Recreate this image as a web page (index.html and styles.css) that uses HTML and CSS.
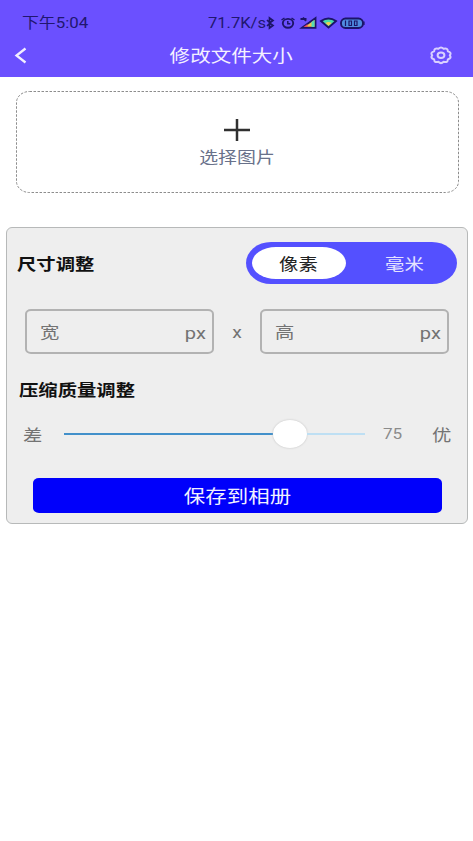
FILE: index.html
```html
<!DOCTYPE html>
<html lang="zh-CN">
<head>
<meta charset="utf-8">
<title>修改文件大小</title>
<link rel="stylesheet" href="styles.css">
</head>
<body>
<header class="header">
  <div class="status">
    <span class="wide left clock">下午5:04</span>
    <span class="wide left speed">71.7K/s</span>
    <svg class="status-icons" width="102" height="16" viewBox="0 0 102 16" fill="none" stroke="#1c1468" stroke-width="1.900">
      <path d="M6.500 3L10 5.500L6.500 8L10 10.500L6.500 13ZM4 5L10 11M4 11L10 5" stroke-width="1.700"/>
      <ellipse cx="25" cy="8.300" rx="5.200" ry="4.400"/>
      <path d="M24.800 6v2.700h2.500M18.500 5l3-2M31.500 5l-3-2" stroke-width="1.500"/>
      <path d="M39 12.800L52.500 3V12.800Z" fill="#f2c34b"/>
      <path d="M40.500 12L44.500 9V12Z" fill="#ee4b5c" stroke="none"/>
      <path d="M48.500 7L51.500 5V12H48.500Z" fill="#55dcb5" stroke="none"/>
      <path d="M37.500 4h6M40 2.500L43 6"/>
      <path d="M58 6Q65.500 1 73 6L65.500 12.500Z" fill="#48dca9"/>
      <path d="M62.500 8Q65.500 6 68.500 8L65.500 10.800Z" fill="#f1cf50" stroke="none"/>
      <rect x="78" y="3.500" width="22" height="9.500" rx="4.500" fill="#4f8ce0"/>
      <path d="M82.500 5.500v5.500M86 6h2.500v4.500H86ZM91.500 6h2.500v4.500h-2.500ZM101 6.500v3.500" stroke-width="1.200"/>
    </svg>
  </div>
  <nav class="navbar">
    <svg class="back" width="14" height="18" viewBox="0 0 14 18" fill="none" stroke="#f2eeff" stroke-width="2.300"><path d="M11.500 1.500L2.500 8.500L11.500 15.500"/></svg>
    <h1 class="wide">修改文件大小</h1>
    <svg class="gear" width="24" height="20" viewBox="0 0 24 20" fill="none" stroke="#d9d0ff" stroke-width="2" stroke-linejoin="round">
      <path d="M9.400 2.800Q12 .2 14.600 2.800Q19 1.600 18.800 5.200Q23 6.400 20.800 9.300Q23 12.200 18.800 13.400Q19 17 14.600 15.800Q12 18.400 9.400 15.800Q5 17 5.200 13.400Q1 12.200 3.200 9.300Q1 6.400 5.200 5.200Q5 1.600 9.400 2.800Z"/>
      <ellipse cx="12" cy="9.300" rx="3.400" ry="2.700"/>
    </svg>
  </nav>
</header>
<main>
  <section class="upload">
    <svg class="outline" width="443" height="102"><rect x=".5" y=".5" width="442" height="101" rx="13" ry="11"/></svg>
    <svg class="plus" width="26" height="22" viewBox="0 0 26 22" stroke="#303030" stroke-width="2.500"><path d="M0 11H26M13 0V22"/></svg>
    <span class="wide upload-label">选择图片</span>
  </section>
  <section class="panel">
    <div class="size-row">
      <h2 class="wide left">尺寸调整</h2>
      <div class="toggle">
        <div class="option selected"><span class="wide">像素</span></div>
        <div class="option"><span class="wide">毫米</span></div>
      </div>
    </div>
    <div class="fields">
      <div class="field"><span class="wide left">宽</span><span class="wide right">px</span></div>
      <span class="wide times">x</span>
      <div class="field"><span class="wide left">高</span><span class="wide right">px</span></div>
    </div>
    <h2 class="wide left quality">压缩质量调整</h2>
    <div class="slider-row">
      <span class="wide left worst">差</span>
      <div class="slider"><div class="filled"></div><div class="thumb"></div><div class="rest"></div></div>
      <span class="wide left value">75</span>
      <span class="wide right best">优</span>
    </div>
    <div class="save"><span class="wide">保存到相册</span></div>
  </section>
</main>
</body>
</html>
```

FILE: styles.css
```css
* { box-sizing: border-box; }
body {
  margin: 0;
  background: #fff;
  font-family: Roboto, "Noto Sans CJK SC", sans-serif;
  font-size: 16.4px;
  line-height: 24px;
  color: #737373;
}
h1, h2 { margin: 0; }
svg { display: block; flex: none; }
.wide { display: inline-block; flex: none; white-space: nowrap; transform: scaleX(1.18); }
.left { transform-origin: left center; }
.right { transform-origin: right center; }

.header { height: 76.5px; padding-top: 11px; background: #6b50ff; }
.status { display: flex; align-items: center; height: 24px; padding-left: 22px; color: #21176f; font-size: 14.3px; }
.clock { width: 186px; }
.speed { width: 55px; font-size: 14px; }
.navbar { display: flex; align-items: center; justify-content: space-between; height: 41px; padding: 0 20px 0 14px; }
.navbar h1 { color: #f4f0ff; font-size: 17.4px; font-weight: 400; margin-left: 6px; padding-top: 1px; }

.upload {
  display: flex;
  flex-direction: column;
  align-items: center;
  width: 443px;
  height: 102px;
  margin: 14.5px 0 0 15.5px;
  position: relative;
}
.outline { position: absolute; inset: 0; }
.outline rect { fill: none; stroke: #8d8d8d; stroke-width: 1; stroke-dasharray: 2.5 1.5; }
.plus { margin-top: 28px; }
.upload-label { margin-top: 5px; color: #68718a; font-size: 16px; }

.panel {
  width: 462px;
  height: 297px;
  margin: 34px 0 0 6px;
  padding-top: 14px;
  background: #eee;
  border: 1.5px solid #b7b9b9;
  border-radius: 6px;
}
.panel h2 { color: #111; font-size: 16.4px; font-weight: 700; }
.size-row { display: flex; align-items: center; justify-content: space-between; height: 42px; padding: 0 10px; }
.size-row .wide { padding-top: 3px; }
.toggle { display: flex; width: 211px; height: 42px; padding: 5px 6px; background: #5450ff; border-radius: 25px / 21px; }
.option { display: flex; align-items: center; justify-content: center; flex: 1; color: #e5e3ff; padding-left: 11px; }
.selected { flex: none; width: 94px; padding: 0 2px 0 0; background: #fff; border-radius: 24px / 16px; color: #222; }
.fields { display: flex; align-items: center; justify-content: space-between; margin: 25px 18px 0; }
.field {
  display: flex;
  align-items: center;
  justify-content: space-between;
  width: 189px;
  height: 45px;
  padding: 2px 6px 0 13px;
  border: 2px solid #b2b2b2;
  border-radius: 6px / 5px;
}
.field .right { font-size: 17px; }
.times { padding-top: 3px; }
.quality { display: block; width: max-content; margin: 25px 0 0 12px; }
.slider-row { display: flex; align-items: center; height: 28px; margin: 17px 16px 0; }
.slider { display: flex; align-items: center; width: 301px; margin-left: 25px; }
.filled { width: 209px; height: 2.5px; background: #4290ca; }
.thumb { width: 34px; height: 28px; border-radius: 50%; background: #fff; box-shadow: 0 0 2px #bbb; }
.rest { flex: 1; height: 2.5px; background: #bedff3; }
.worst, .best { padding-top: 3px; }
.value { margin-left: 18px; padding-top: 2px; font-size: 14.5px; color: #8b8b8b; }
.best { margin-left: auto; }
.save {
  display: flex;
  align-items: center;
  justify-content: center;
  width: 409px;
  height: 35px;
  margin: 30px 0 0 26px;
  padding-top: 2px;
  background: #0000fb;
  border-radius: 6px / 5px;
  color: #f0f0ff;
  font-size: 18.2px;
}
```
